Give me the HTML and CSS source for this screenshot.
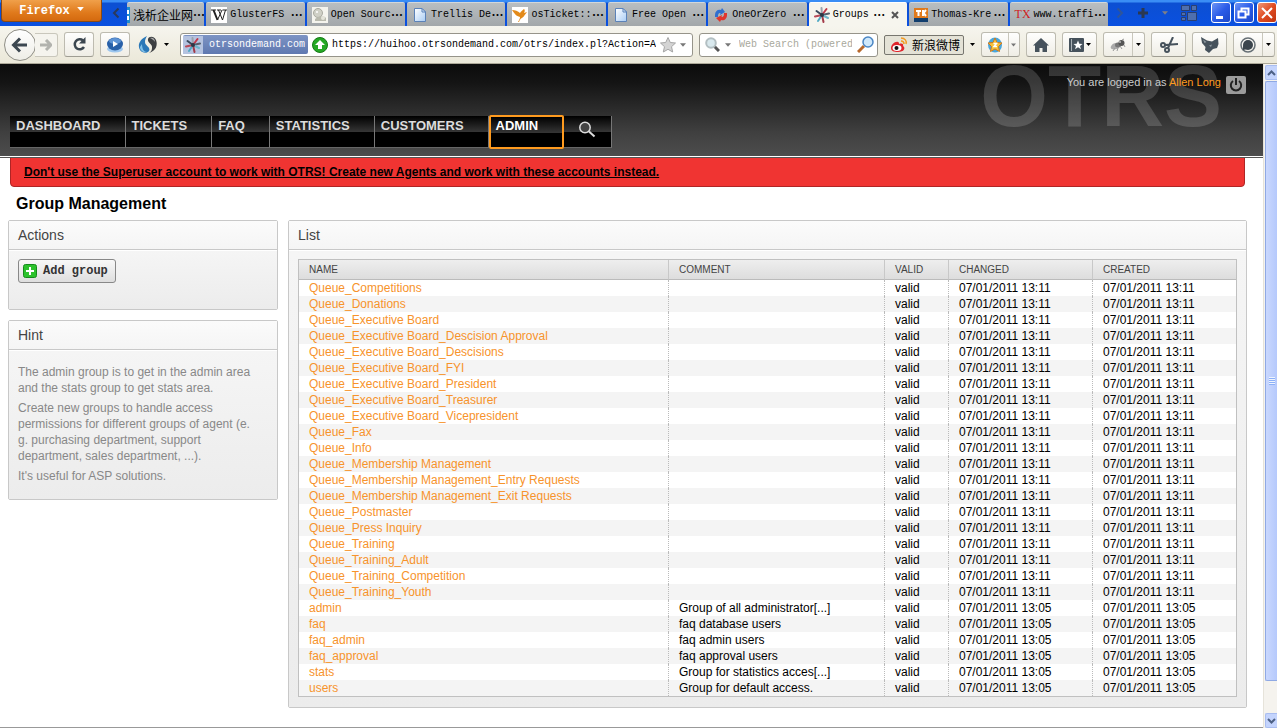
FILE: index.html
```html
<!DOCTYPE html>
<html lang="en">
<head>
    <meta charset="UTF-8">
    <meta name="viewport" content="width=device-width, initial-scale=1.0">
    <title>Groups - OTRS</title>
    <link rel="stylesheet" href="styles.css">
</head>
<body>
    <!-- shared icons -->
    <svg class="defs" aria-hidden="true">
        <linearGradient id="paper" x1="0" y1="0" x2="1" y2="1">
            <stop offset="0" stop-color="#fff"/>
            <stop offset="1" stop-color="#a9cdf5"/>
        </linearGradient>
        <symbol id="doc" viewBox="0 0 16 16">
            <path d="M2.5 1.500h7.500l3.500 3.500v9.500h-11z" fill="url(#paper)" stroke="#5b82b8"/>
            <path d="M10 1.500v3.500h3.500z" fill="#d8e8fb" stroke="#5b82b8"/>
        </symbol>
        <symbol id="star" viewBox="0 0 16 16">
            <g stroke-width="2" stroke-linecap="round">
                <path d="M8 8L7.500 1" stroke="#9aa3ad"/>
                <path d="M8 8L12.500 2" stroke="#c0394b"/>
                <path d="M8 8L15 6.500" stroke="#55606e"/>
                <path d="M8 8L14 11" stroke="#6fb6cc"/>
                <path d="M8 8L9.500 15" stroke="#a33b4a"/>
                <path d="M8 8L4 14" stroke="#4fa9c4"/>
                <path d="M8 8L1 9.500" stroke="#b84a58"/>
                <path d="M8 8L2.500 4" stroke="#39495c"/>
            </g>
            <circle cx="8" cy="8" r="2" fill="#2c3644"/>
        </symbol>
        <symbol id="down" viewBox="0 0 5 3">
            <path d="M0 0h5L2.500 3z" fill="currentColor"/>
        </symbol>
    </svg>

    <div class="tabbar">
        <button class="firefox-btn">Firefox <svg width="7" height="4"><use href="#down"/></svg></button>
        <button class="scroll-left" aria-label="Scroll tabs left"><svg width="8" height="12" viewBox="0 0 8 12"><path d="M6.500 1.500L2 6l4.500 4.500" fill="none" stroke="#2a3a5c" stroke-width="2"/></svg></button>
        <div class="tabs">
            <button class="tab first">
                <svg width="3" height="16" viewBox="0 0 3 16"><path d="M0 0h3v16H0z" fill="#1c8bd0"/><path d="M0 3h2v4H0zM0 9h2v4H0z" fill="#fff"/></svg>
                <span class="cjk">浅析企业网</span><span class="more">…</span>
            </button>
            <button class="tab">
                <svg width="16" height="16" viewBox="0 0 16 16"><path d="M0 0h16v16H0z" fill="#fff"/><path d="M0 3h5M6 3h4M11.500 3H16M7.500 3l4 10L14.500 3M11 3L6.500 13" fill="none" stroke="#222"/><path d="M2.500 3l4 10" stroke="#222" stroke-width="2"/></svg>
                <span>GlusterFS</span> <span class="more">…</span>
            </button>
            <button class="tab">
                <svg width="16" height="16" viewBox="0 0 16 16"><path d="M0 0h16v16H0z" fill="#f4f4ee"/><circle cx="6" cy="6" r="4.500" fill="#cfd0c6" stroke="#a9aaa0"/><path d="M3 12c3-3 9-4 11-1v3H3z" fill="#b9baae"/><circle cx="5" cy="5" r="1" fill="#fff"/><circle cx="11" cy="11" r="2" fill="#e4e4da"/></svg>
                <span>Open Sourc</span><span class="more">…</span>
            </button>
            <button class="tab">
                <svg width="16" height="16"><use href="#doc"/></svg>
                <span>Trellis De</span><span class="more">…</span>
            </button>
            <button class="tab">
                <svg width="16" height="16" viewBox="0 0 16 16"><path d="M0 0h16v16H0z" fill="#fff"/><path d="M0 3c3 0 6 1 8 3 1-2 3-3 4-4 1 1 1 2 0 4l3-1-3 4c-1 2-4 2-5 6H6c1-2 2-3 2-5C4 9 3 7 0 3z" fill="#e38a1a"/></svg>
                <span>osTicket::</span><span class="more">…</span>
            </button>
            <button class="tab">
                <svg width="16" height="16"><use href="#doc"/></svg>
                <span>Free Open</span> <span class="more">…</span>
            </button>
            <button class="tab">
                <svg width="16" height="16" viewBox="0 0 16 16"><path d="M2 10V8c0-4 3-6 6-5l1-2 3 4-5 3 .500-2C5 6 5 8 5 10z" fill="#2f6fd0"/><path d="M14 6v2c0 4-3 6-6 5l-1 2-4-4 6-3-.500 2C11 10 11 8 11 6z" fill="#e0352d"/></svg>
                <span>OneOrZero</span> <span class="more">…</span>
            </button>
            <button class="tab active">
                <svg width="16" height="16"><use href="#star"/></svg>
                <span>Groups</span> <span class="more">…</span>
                <svg class="close" width="8" height="8" viewBox="0 0 8 8"><path d="M1 1l6 6M7 1L1 7" stroke="#555" stroke-width="2"/></svg>
            </button>
            <button class="tab">
                <svg width="14" height="16" viewBox="0 0 14 16"><path d="M0 1h14v10H0z" fill="#e07a1c"/><path d="M0 11h14v4H0z" fill="#123f6e"/><path d="M2 4h5M4.500 4v5M9 3v6M12 3L9.500 6l2.500 3" fill="none" stroke="#fff" stroke-width="2"/></svg>
                <span>Thomas-Kre</span><span class="more">…</span>
            </button>
            <button class="tab">
                <span class="tx">TX</span>
                <span>www.traffi</span><span class="more">…</span>
            </button>
        </div>
        <div class="tab-tools">
            <button aria-label="Scroll tabs right"><svg width="8" height="12" viewBox="0 0 8 12"><path d="M1.500 1.500L6 6l-4.500 4.500" fill="none" stroke="#2f5599" stroke-width="2"/></svg></button>
            <button aria-label="New tab"><svg width="12" height="12" viewBox="0 0 12 12"><path d="M6 1v10M1 6h10" stroke="#2b3850" stroke-width="3"/></svg></button>
            <button class="list-all" aria-label="List tabs"><svg width="6" height="4"><use href="#down"/></svg></button>
            <button aria-label="Tab groups"><svg width="16" height="16" viewBox="0 0 16 16"><g fill="#4f6fae" stroke="#2a3f70"><path d="M.500.500h8v5h-8zM10.500.500h5v5h-5zM.500 7.500h4v3h-4zM6.500 7.500h9v8h-9zM.500 12.500h4v3h-4z"/></g></svg></button>
        </div>
        <div class="window-btns">
            <button aria-label="Minimize"><svg width="20" height="20" viewBox="0 0 20 20"><path d="M5 13h7v3H5z" fill="#fff"/></svg></button>
            <button aria-label="Restore"><svg width="20" height="20" viewBox="0 0 20 20"><path d="M7.500 8V5.500h7v6H12M4.500 8.500h7v6h-7z" fill="none" stroke="#fff" stroke-width="2"/></svg></button>
            <button class="quit" aria-label="Close"><svg width="20" height="20" viewBox="0 0 20 20"><path d="M5 5l10 10M15 5L5 15" stroke="#fff" stroke-width="2"/></svg></button>
        </div>
    </div>

    <div class="toolbar">
        <div class="history">
            <button class="back" aria-label="Back"><svg width="18" height="16" viewBox="0 0 18 16"><path d="M9 1.500L2.500 8 9 14.500M3 8h13" fill="none" stroke="#3c4750" stroke-width="3"/></svg></button>
            <button class="forward" aria-label="Forward"><svg width="12" height="12" viewBox="0 0 12 12"><path d="M6 1l5 5-5 5M10 6H0" fill="none" stroke="#b2b3ae" stroke-width="3"/></svg></button>
        </div>
        <button class="tool w30" aria-label="Reload"><svg width="15" height="15" viewBox="0 0 15 15"><path d="M11 3.500A5 5 0 1 0 12 10" fill="none" stroke="#3c4750" stroke-width="2.500"/><path d="M13.500 0v6.500H7z" fill="#3c4750"/></svg></button>
        <button class="tool w30" aria-label="Play"><svg width="18" height="16" viewBox="0 0 18 16"><ellipse cx="9" cy="12" rx="8" ry="3.500" fill="#9cc6ee"/><ellipse cx="9" cy="7" rx="8" ry="6.500" fill="#2860a8"/><ellipse cx="9" cy="4" rx="6" ry="3" fill="#5d93d4"/><path d="M7 4l5 3-5 3z" fill="#fff"/></svg></button>
        <button class="plain swirl" aria-label="Share">
            <svg width="20" height="20" viewBox="0 0 20 20"><path d="M9 1C2 4-1 10 2 15c2 3 7 4 9 1 2-4-4-5-4-9 0-3 1-4 2-6z" fill="#2a78b8"/><path d="M2 12c0 4 4 6 7 5-3 0-5-3-5-8z" fill="#7fc0e8"/><path d="M11 18c7-2 9-8 7-13-2-4-7-4-8-1-1 4 5 5 4 9 0 2-1 4-3 5z" fill="#3c3f42"/><path d="M12 3c3-1 5 1 5 4-1-2-3-3-5-4z" fill="#aaa"/></svg>
            <svg width="5" height="3"><use href="#down"/></svg>
        </button>
        <div class="urlbar">
            <button class="identity"><span class="site"><svg width="16" height="16"><use href="#star"/></svg></span>otrsondemand.com</button>
            <svg width="16" height="16" viewBox="0 0 16 16"><circle cx="8" cy="8" r="7.500" fill="#25a825" stroke="#157a15"/><path d="M8 3l5 5h-3v4H6V8H3z" fill="#fff"/></svg>
            <input type="text" aria-label="Address" value="https://huihoo.otrsondemand.com/otrs/index.pl?Action=A">
            <svg width="16" height="16" viewBox="0 0 16 16"><path d="M8 .500l2.300 5 5.200.500-4 3.700 1.200 5.300L8 12.300 3.300 15l1.200-5.300L.500 6l5.200-.500z" fill="#d4d4d4" stroke="#a5a5a5"/></svg>
            <svg class="grey" width="6" height="4"><use href="#down"/></svg>
        </div>
        <div class="search">
            <svg width="15" height="15" viewBox="0 0 15 15"><path d="M9 9l5 5" stroke="#555" stroke-width="3"/><circle cx="6" cy="6" r="4.800" fill="#d9e9ee" stroke="#b3bfc2" stroke-width="2"/></svg>
            <svg class="grey" width="6" height="4"><use href="#down"/></svg>
            <input type="text" aria-label="Web search" placeholder="Web Search (powered b">
            <button aria-label="Search"><svg width="17" height="17" viewBox="0 0 17 17"><path d="M7 10l-6 6" stroke="#b8682c" stroke-width="3"/><circle cx="11" cy="6" r="5" fill="#cfe8fb" stroke="#4a86c4" stroke-width="1.500"/></svg></button>
        </div>
        <button class="weibo"><svg width="18" height="16" viewBox="0 0 18 16"><path d="M1 11c0-3 4-7 7-6 1 0 1 1 1 2 3-1 5 0 4 2 3 2 1 6-5 6-4 0-7-1-7-4z" fill="#e0242b"/><ellipse cx="7" cy="11" rx="4.500" ry="3" fill="#fff"/><circle cx="6.500" cy="11" r="2" fill="#111"/><path d="M11 4c2 0 3 1 3 3M11 1c4 0 6 3 5 6" fill="none" stroke="#f29a22" stroke-width="1.500"/></svg>新浪微博</button>
        <svg width="5" height="3"><use href="#down"/></svg>
        <button class="tool split narrow grey" aria-label="Badges">
            <span><svg width="16" height="16" viewBox="0 0 16 16"><ellipse cx="8" cy="8" rx="7" ry="7.500" fill="#4aa7dc"/><path d="M8 1l2 4.500 5 .500-3.500 3.500 1 5L8 12l-4.500 2.500 1-5L1 6l5-.500z" fill="#f7c23a" stroke="#d0781a"/><path d="M6.500 6.500h3L7 9.500h3" fill="none" stroke="#fff" stroke-width="1.500"/></svg></span>
            <svg width="5" height="4"><use href="#down"/></svg>
        </button>
        <button class="tool w30" aria-label="Home"><svg width="16" height="14" viewBox="0 0 16 14"><path d="M8 0l8 7.500h-2V14H9.500v-4h-3v4H2V7.500H0z" fill="#46525c"/></svg></button>
        <button class="tool w35" aria-label="Bookmarks"><svg width="15" height="14" viewBox="0 0 15 14"><rect width="15" height="14" rx="1" fill="#46525c"/><path d="M2.500 1v12" stroke="#a9b1b6"/><path d="M9 2.500l1.300 3.200 3.200.200-2.500 2 1 3.300-3-1.900-3 1.900 1-3.300-2.500-2 3.200-.200z" fill="#fff"/></svg><svg width="5" height="3"><use href="#down"/></svg></button>
        <button class="tool split" aria-label="Fly">
            <span><svg width="16" height="14" viewBox="0 0 16 14"><ellipse cx="5.500" cy="8" rx="5" ry="3" fill="#aaa" transform="rotate(-20 6 8)"/><ellipse cx="8" cy="7" rx="3" ry="2.500" fill="#777"/><ellipse cx="11.500" cy="5" rx="3" ry="3" fill="#555"/><path d="M3 13l2-3M7 13l1-3M12 11l-2-3M12 2l2-1M14 7l1 2" stroke="#999"/><circle cx="10" cy="4" r="1" fill="#bbb"/></svg></span>
            <svg width="5" height="3"><use href="#down"/></svg>
        </button>
        <button class="tool w35" aria-label="Clip"><svg width="18" height="16" viewBox="0 0 18 16"><g fill="none" stroke="#46525c" stroke-width="2"><circle cx="3" cy="8" r="2"/><circle cx="7" cy="13" r="2"/><path d="M5 8l13-1M8 11L13 0"/></g></svg></button>
        <button class="tool w35" aria-label="Fox"><svg width="18" height="16" viewBox="0 0 18 16"><path d="M0 0l6 3.500 5 1L17 1l.500 6-1.500 4-4 1-4 4-4-3 .500-3L1 6z" fill="#46525c"/><path d="M2 2.500l3.500 2.500-2 1zM8 8.500l3-1-1 2.500z" fill="#8d989f"/></svg></button>
        <button class="tool split" aria-label="Chat">
            <span><svg width="16" height="16" viewBox="0 0 16 16"><circle cx="8" cy="8" r="7" fill="none" stroke="#666f75" stroke-width="1.500"/><circle cx="8" cy="8" r="5" fill="#3b454d"/><path d="M3 8v5l5-1z" fill="#3b454d"/></svg></span>
            <svg width="5" height="3"><use href="#down"/></svg>
        </button>
    </div>

    <div class="viewport">
        <div class="page">
            <header class="header">
                <div class="watermark">OTRS</div>
                <div class="user">
                    <span>You are logged in as <a href="#">Allen Long</a></span>
                    <button class="logout" aria-label="Logout"><svg width="14" height="14" viewBox="0 0 14 14"><path d="M4 3a5.200 5.200 0 1 0 6 0M7 0v7" fill="none" stroke="#222" stroke-width="2"/></svg></button>
                </div>
                <nav class="nav">
                    <a href="#">DASHBOARD</a>
                    <a href="#">TICKETS</a>
                    <a href="#">FAQ</a>
                    <a href="#">STATISTICS</a>
                    <a href="#">CUSTOMERS</a>
                    <a href="#" class="selected">ADMIN</a>
                    <a href="#" class="find" aria-label="Search"><svg width="18" height="17" viewBox="0 0 18 17"><circle cx="7" cy="6.500" r="5.200" fill="#444" stroke="#ddd" stroke-width="1.500"/><path d="M11 10.500l5.500 5" stroke="#ddd" stroke-width="2"/></svg></a>
                </nav>
            </header>

            <div class="notice"><a href="#">Don't use the Superuser account to work with OTRS! Create new Agents and work with these accounts instead.</a></div>

            <h1>Group Management</h1>

            <div class="layout">
                <aside class="sidebar">
                    <section class="widget">
                        <h2>Actions</h2>
                        <div class="content actions">
                            <button class="add-btn"><svg width="14" height="14" viewBox="0 0 14 14"><rect x=".5" y=".5" width="13" height="13" rx="2" fill="#2cc22c" stroke="#168a1d"/><path d="M7 3v8M3 7h8" stroke="#fff" stroke-width="2"/></svg>Add group</button>
                        </div>
                    </section>
                    <section class="widget">
                        <h2>Hint</h2>
                        <div class="content hint">
                            <p>The admin group is to get in the admin area and the stats group to get stats area.</p>
                            <p>Create new groups to handle access permissions for different groups of agent (e. g. purchasing department, support department, sales department, ...).</p>
                            <p>It's useful for ASP solutions.</p>
                        </div>
                    </section>
                </aside>

                <section class="widget main">
                    <h2>List</h2>
                    <div class="content">
                        <table>
                            <colgroup>
                                <col>
                                <col class="col-comment">
                                <col class="col-valid">
                                <col class="col-date">
                                <col class="col-date">
                            </colgroup>
                            <thead>
                                <tr><th>NAME</th><th>COMMENT</th><th>VALID</th><th>CHANGED</th><th>CREATED</th></tr>
                            </thead>
                            <tbody>
                                <tr><td><a href="#">Queue_Competitions</a></td><td></td><td>valid</td><td>07/01/2011 13:11</td><td>07/01/2011 13:11</td></tr>
                                <tr><td><a href="#">Queue_Donations</a></td><td></td><td>valid</td><td>07/01/2011 13:11</td><td>07/01/2011 13:11</td></tr>
                                <tr><td><a href="#">Queue_Executive Board</a></td><td></td><td>valid</td><td>07/01/2011 13:11</td><td>07/01/2011 13:11</td></tr>
                                <tr><td><a href="#">Queue_Executive Board_Descision Approval</a></td><td></td><td>valid</td><td>07/01/2011 13:11</td><td>07/01/2011 13:11</td></tr>
                                <tr><td><a href="#">Queue_Executive Board_Descisions</a></td><td></td><td>valid</td><td>07/01/2011 13:11</td><td>07/01/2011 13:11</td></tr>
                                <tr><td><a href="#">Queue_Executive Board_FYI</a></td><td></td><td>valid</td><td>07/01/2011 13:11</td><td>07/01/2011 13:11</td></tr>
                                <tr><td><a href="#">Queue_Executive Board_President</a></td><td></td><td>valid</td><td>07/01/2011 13:11</td><td>07/01/2011 13:11</td></tr>
                                <tr><td><a href="#">Queue_Executive Board_Treasurer</a></td><td></td><td>valid</td><td>07/01/2011 13:11</td><td>07/01/2011 13:11</td></tr>
                                <tr><td><a href="#">Queue_Executive Board_Vicepresident</a></td><td></td><td>valid</td><td>07/01/2011 13:11</td><td>07/01/2011 13:11</td></tr>
                                <tr><td><a href="#">Queue_Fax</a></td><td></td><td>valid</td><td>07/01/2011 13:11</td><td>07/01/2011 13:11</td></tr>
                                <tr><td><a href="#">Queue_Info</a></td><td></td><td>valid</td><td>07/01/2011 13:11</td><td>07/01/2011 13:11</td></tr>
                                <tr><td><a href="#">Queue_Membership Management</a></td><td></td><td>valid</td><td>07/01/2011 13:11</td><td>07/01/2011 13:11</td></tr>
                                <tr><td><a href="#">Queue_Membership Management_Entry Requests</a></td><td></td><td>valid</td><td>07/01/2011 13:11</td><td>07/01/2011 13:11</td></tr>
                                <tr><td><a href="#">Queue_Membership Management_Exit Requests</a></td><td></td><td>valid</td><td>07/01/2011 13:11</td><td>07/01/2011 13:11</td></tr>
                                <tr><td><a href="#">Queue_Postmaster</a></td><td></td><td>valid</td><td>07/01/2011 13:11</td><td>07/01/2011 13:11</td></tr>
                                <tr><td><a href="#">Queue_Press Inquiry</a></td><td></td><td>valid</td><td>07/01/2011 13:11</td><td>07/01/2011 13:11</td></tr>
                                <tr><td><a href="#">Queue_Training</a></td><td></td><td>valid</td><td>07/01/2011 13:11</td><td>07/01/2011 13:11</td></tr>
                                <tr><td><a href="#">Queue_Training_Adult</a></td><td></td><td>valid</td><td>07/01/2011 13:11</td><td>07/01/2011 13:11</td></tr>
                                <tr><td><a href="#">Queue_Training_Competition</a></td><td></td><td>valid</td><td>07/01/2011 13:11</td><td>07/01/2011 13:11</td></tr>
                                <tr><td><a href="#">Queue_Training_Youth</a></td><td></td><td>valid</td><td>07/01/2011 13:11</td><td>07/01/2011 13:11</td></tr>
                                <tr><td><a href="#">admin</a></td><td>Group of all administrator[...]</td><td>valid</td><td>07/01/2011 13:05</td><td>07/01/2011 13:05</td></tr>
                                <tr><td><a href="#">faq</a></td><td>faq database users</td><td>valid</td><td>07/01/2011 13:05</td><td>07/01/2011 13:05</td></tr>
                                <tr><td><a href="#">faq_admin</a></td><td>faq admin users</td><td>valid</td><td>07/01/2011 13:05</td><td>07/01/2011 13:05</td></tr>
                                <tr><td><a href="#">faq_approval</a></td><td>faq approval users</td><td>valid</td><td>07/01/2011 13:05</td><td>07/01/2011 13:05</td></tr>
                                <tr><td><a href="#">stats</a></td><td>Group for statistics acces[...]</td><td>valid</td><td>07/01/2011 13:05</td><td>07/01/2011 13:05</td></tr>
                                <tr><td><a href="#">users</a></td><td>Group for default access.</td><td>valid</td><td>07/01/2011 13:05</td><td>07/01/2011 13:05</td></tr>
                            </tbody>
                        </table>
                    </div>
                </section>
            </div>
        </div>

        <div class="scrollbar">
            <button aria-label="Scroll up"><svg width="9" height="6" viewBox="0 0 9 6"><path d="M1 5l3.500-3.500L8 5" fill="none" stroke="#4d6185" stroke-width="2"/></svg></button>
            <div class="thumb"><svg width="6" height="8" viewBox="0 0 6 8"><path d="M0 .500h6M0 2.500h6M0 4.500h6M0 6.500h6" stroke="#eef4fe"/><path d="M0 1.500h6M0 3.500h6M0 5.500h6M0 7.500h6" stroke="#8cb0f8"/></svg></div>
            <div class="track"></div>
            <button aria-label="Scroll down"><svg width="9" height="6" viewBox="0 0 9 6"><path d="M1 1l3.500 3.500L8 1" fill="none" stroke="#4d6185" stroke-width="2"/></svg></button>
        </div>
    </div>
</body>
</html>
```
FILE: styles.css
```css
* {
    box-sizing: border-box;
}

body {
    margin: 0;
    min-height: 100vh;
    display: flex;
    flex-direction: column;
    font-family: "Liberation Sans", Arial, sans-serif;
    font-size: 12px;
    color: #000;
    background: #fff;
}

button, input {
    font-family: "Liberation Mono", "Noto Sans CJK SC", monospace;
    font-size: 10px;
    margin: 0;
    padding: 0;
    border: none;
    background: none;
    color: #000;
}

svg {
    flex: none;
}

.defs {
    position: absolute;
    width: 0;
    height: 0;
}

/* tab bar */
.tabbar {
    display: flex;
    height: 26px;
    background: linear-gradient(#3a8df5 0, #3a8df5 2px, #0c4fd2 3px, #0a50e0 100%);
}

.firefox-btn {
    width: 101px;
    height: 22px;
    flex: none;
    margin-left: 1px;
    border: 1px solid #8a4a14;
    border-top: none;
    border-radius: 0 0 4px 4px;
    background: linear-gradient(#f0a04a, #e07a1c 60%, #d4690e);
    color: #fff;
    font-size: 12px;
    font-weight: bold;
}

.firefox-btn svg {
    margin-bottom: 3px;
}

.scroll-left {
    width: 25px;
    flex: none;
    padding: 3px 0 0 3px;
}

.tabs {
    display: flex;
    flex: 1;
    gap: 2px;
    padding-top: 2px;
    overflow: hidden;
}

.tab {
    display: flex;
    align-items: center;
    flex: 98 1 0;
    min-width: 0;
    padding: 0 0 0 5px;
    overflow: hidden;
    white-space: nowrap;
    border-top: 1px solid #d3d8db;
    border-radius: 2px 2px 0 0;
    background: linear-gradient(#b9bec1, #a2a7aa);
}

.tab svg {
    margin-right: 3px;
}

.tab.first {
    flex-grow: 81;
    padding-left: 0;
}

.tab.active {
    background: #f6f5ee;
    border-color: #fff;
}

.tab .cjk {
    font-size: 12px;
}

.tab .more {
    font-family: "Noto Sans CJK SC", sans-serif;
    font-size: 12px;
    font-weight: bold;
    margin: 0 0 0 auto;
    padding-right: 2px;
}

.tab .close {
    margin: 0 8px 0 4px;
}

.tx {
    margin-right: 3px;
    color: #d01c1c;
    font-family: "Liberation Serif", serif;
    font-size: 12px;
}

.tab-tools {
    display: flex;
    align-items: center;
    gap: 13px;
    padding: 0 14px 0 8px;
}

.tab-tools button {
    display: flex;
}

.tab-tools .list-all {
    color: #7f7f86;
}

.window-btns {
    display: flex;
    gap: 3px;
    padding-top: 2px;
}

.window-btns button {
    width: 20px;
    height: 21px;
    border: 1px solid #fff;
    border-radius: 3px;
    background: linear-gradient(135deg, #6d95f5, #2b5ce8 50%, #1c48c8);
    overflow: hidden;
    display: flex;
    justify-content: center;
}

.window-btns .quit {
    background: linear-gradient(135deg, #f09878, #e04c22 50%, #c03410);
}

/* navigation toolbar */
.toolbar {
    display: flex;
    align-items: center;
    gap: 6px;
    height: 38px;
    padding: 0 2px 0 4px;
    background: linear-gradient(#f6f5ee, #ebe8d9);
    border-bottom: 1px solid #aca899;
}

.history {
    display: flex;
    align-items: center;
}

.back {
    display: flex;
    align-items: center;
    justify-content: center;
    width: 32px;
    height: 32px;
    border: 1px solid #8f8e86;
    border-radius: 50%;
    background: linear-gradient(#fff, #eeede6);
}

.forward {
    display: flex;
    align-items: center;
    justify-content: center;
    width: 23px;
    height: 24px;
    margin-left: -1px;
    border: 1px solid #c9c7bc;
    border-left: none;
    border-radius: 0 3px 3px 0;
    background: #f5f4ee;
}

.tool {
    display: flex;
    align-items: center;
    justify-content: center;
    flex: none;
    gap: 2px;
    height: 25px;
    border: 1px solid #bdbbb0;
    border-bottom-color: #9f9d93;
    border-radius: 3px;
    background: linear-gradient(#fefefd, #efede5);
}

.w30 {
    width: 30px;
}

.w35 {
    width: 35px;
}

.split {
    width: 42px;
    gap: 0;
    justify-content: flex-start;
}

.split span {
    display: flex;
    align-items: center;
    justify-content: center;
    width: 29px;
    height: 23px;
    margin-right: 3px;
    border-right: 1px solid #c9c7bc;
}

.narrow {
    width: 39px;
}

.narrow span {
    width: 27px;
    margin-right: 2px;
}

.grey {
    color: #777;
}

.plain {
    display: flex;
    align-items: center;
    gap: 6px;
}

.swirl {
    padding: 0 5px 0 2px;
}

.urlbar, .search {
    display: flex;
    align-items: center;
    height: 24px;
    border: 1px solid #96948a;
    border-radius: 3px;
    background: #fff;
}

.urlbar {
    flex: 1;
    min-width: 0;
    gap: 4px;
    padding: 0 6px 0 2px;
}

.identity {
    display: flex;
    align-items: center;
    gap: 6px;
    flex: none;
    height: 19px;
    padding-right: 3px;
    border-radius: 2px;
    background: linear-gradient(#7d94c4, #5f78b0);
    color: #fff;
}

.site {
    display: flex;
    padding: 1px 2px;
    background: #b5c3e0;
}

.urlbar input {
    flex: 1;
    min-width: 0;
}

.search {
    width: 179px;
    gap: 5px;
    padding: 0 3px 0 5px;
}

.search input {
    flex: 1;
    min-width: 0;
    margin-left: 3px;
}

.search input::placeholder {
    color: #a8a89c;
}

.search button {
    display: flex;
}

.weibo {
    display: flex;
    align-items: center;
    gap: 4px;
    flex: none;
    height: 20px;
    padding: 0 3px 0 5px;
    border: 1px solid #77766f;
    border-radius: 2px;
    background: #e4e2d6;
    font-family: "Noto Sans CJK SC", sans-serif;
    font-size: 12px;
}

/* viewport */
.viewport {
    display: flex;
    flex: 1;
}

.page {
    flex: 1;
    min-width: 0;
    border-bottom: 1px solid #999;
}

.header {
    position: relative;
    height: 93px;
    padding: 11px 17px 0 10px;
    background: linear-gradient(#0c0c0c, #141414 20%, #404040 75%, #4d4d4d);
    border-bottom: 1px solid #fff;
    box-shadow: 0 1px 0 #555;
}

.watermark {
    position: absolute;
    top: 0;
    right: 41px;
    color: rgba(255, 255, 255, 0.16);
    font-size: 87px;
    font-weight: bold;
    line-height: 64px;
}

.user {
    position: relative;
    display: flex;
    justify-content: flex-end;
    gap: 5px;
    height: 40px;
    color: #ccc;
    font-size: 11px;
    line-height: 15px;
}

.user a {
    color: #ff9b1f;
    text-decoration: none;
}

.logout {
    display: flex;
    align-items: center;
    justify-content: center;
    width: 20px;
    height: 18px;
    margin-top: 1px;
    border-radius: 2px;
    background: #9b9b9b;
}

.nav {
    position: relative;
    display: flex;
    align-items: center;
    height: 34px;
}

.nav a {
    height: 32px;
    padding: 1px 24px 0 6px;
    border-right: 1px solid #777;
    border-bottom: 1px solid #666;
    background: linear-gradient(#000, #363636 16px, #000 16px);
    color: #ddd;
    font-size: 13px;
    font-weight: bold;
    line-height: 17px;
    text-decoration: none;
}

.nav .selected {
    height: 34px;
    padding: 0 24px 0 5px;
    border: 2px solid #ff9b1f;
    border-radius: 2px;
    color: #fff;
}

.nav .find {
    padding: 5px 15px 0 14px;
}

.notice {
    margin: 0 18px 0 10px;
    padding: 7px 13px 6px;
    border: 1px solid #b02525;
    border-radius: 0 0 4px 4px;
    background: #f03432;
    font-weight: bold;
    line-height: 15px;
}

.notice a {
    color: #000;
}

h1 {
    margin: 7px 16px 6px;
    font-size: 16px;
    line-height: 20px;
}

.layout {
    display: flex;
    align-items: flex-start;
    gap: 10px;
    padding: 0 16px 19px 8px;
}

.sidebar {
    flex: none;
    width: 270px;
}

.widget {
    margin-bottom: 10px;
    border: 1px solid #c8c8c8;
    border-radius: 2px;
    background: #eee;
}

.widget h2 {
    margin: 0;
    padding: 0 9px;
    border-bottom: 1px solid #c8c8c8;
    background: linear-gradient(#fbfbfb, #f5f5f5);
    color: #444;
    font-size: 14px;
    font-weight: normal;
    line-height: 28px;
}

.main {
    flex: 1;
    min-width: 0;
    margin-bottom: 0;
}

.content {
    padding: 8px 9px 10px;
    border-top: 1px solid #fff;
    background: linear-gradient(#f5f5f5, #ececec);
}

.actions {
    padding-bottom: 26px;
}

.add-btn {
    display: flex;
    align-items: center;
    gap: 6px;
    height: 24px;
    padding: 0 7px 0 4px;
    border: 1px solid #888;
    border-radius: 3px;
    background: linear-gradient(#f8f8f8, #dedede);
    color: #333;
    font-size: 12px;
    font-weight: bold;
}

.hint {
    padding: 13px 16px 15px 9px;
    color: #888;
    line-height: 16px;
}

.hint p {
    margin: 0 0 4px;
}

.hint p:last-child {
    margin: 0;
}

table {
    width: 100%;
    table-layout: fixed;
    border: 1px solid #c0c0c0;
    border-collapse: separate;
    border-spacing: 0;
    background: #fff;
}

.col-comment {
    width: 216px;
}

.col-valid {
    width: 64px;
}

.col-date {
    width: 144px;
}

.col-date:last-child {
    width: 143px;
}

th {
    height: 20px;
    padding: 0 10px;
    border-right: 1px solid #c8c8c8;
    border-bottom: 1px solid #bbb;
    background: linear-gradient(#eee, #ddd);
    color: #444;
    font-size: 10px;
    font-weight: normal;
    text-align: left;
}

td {
    height: 16px;
    padding: 0 10px;
    border-right: 1px dotted #bbb;
    line-height: 16px;
    white-space: nowrap;
}

th:last-child, td:last-child {
    border-right: none;
}

tbody tr:nth-child(even) {
    background: #f4f4f4;
}

td a {
    color: #f7932b;
    text-decoration: none;
}

/* scrollbar */
.scrollbar {
    display: flex;
    flex-direction: column;
    flex: none;
    width: 14px;
    padding-left: 1px;
    border-left: 1px solid #e6e3da;
    background: #f5f3ee;
}

.scrollbar button {
    display: flex;
    align-items: center;
    justify-content: center;
    height: 15px;
    margin-top: 1px;
    border: 1px solid #a9bdf0;
    border-right: none;
    border-radius: 2px 0 0 2px;
    background: #c4d4fd;
}

.scrollbar .thumb {
    display: flex;
    align-items: center;
    justify-content: center;
    flex: 1;
    margin-top: 1px;
    border: 1px solid #8fa9e4;
    border-right: none;
    border-radius: 2px 0 0 2px;
    background: linear-gradient(to right, #cad8fe, #b5c9fc);
}

.scrollbar .track {
    height: 31px;
}
```
